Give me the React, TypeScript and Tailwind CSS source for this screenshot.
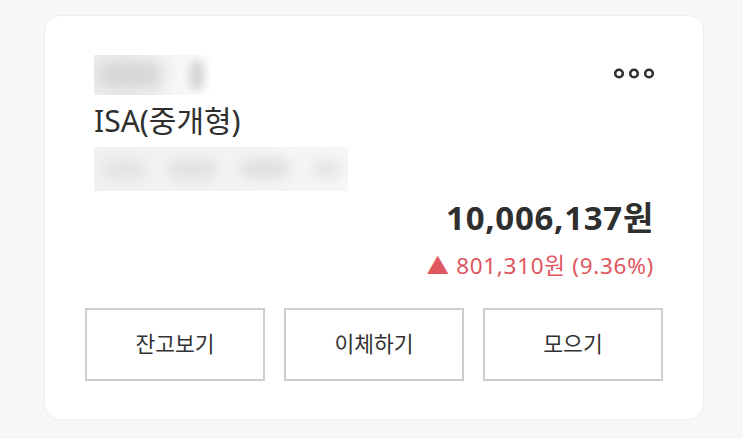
import React from 'react';

const font = { fontFamily: '"Noto Sans", "Noto Sans CJK KR", sans-serif' };

const Dots: React.FunctionComponent = () => (
  <svg width="40" height="13" viewBox="0 0 40 13" className="mt-[12px]">
    {[5, 20, 35].map((cx) => (
      <circle key={cx} cx={cx} cy="6.5" r="3.8" fill="none" stroke="#2f2f2f" strokeWidth="2.6" />
    ))}
  </svg>
);

const actions = ['잔고보기', '이체하기', '모으기'];

export default function App() {
  return (
    <div className="min-h-screen bg-[#f6f7f9] pt-[15px]" style={font}>
      <div className="ml-[44px] w-[660px] rounded-[16px] border border-[#eceef1] bg-white px-[40px] pt-[39px] pb-[38px] text-[#2f2f2f]">
        <div className="px-[9px]">
          <div className="flex items-start justify-between">
            {/* masked account nickname */}
            <div className="flex h-[40px] w-[117px] items-center gap-[28px] overflow-hidden bg-gradient-to-r from-[#ececec] via-[#efefef] to-white pl-[4px]">
              <div className="h-[26px] w-[64px] rounded-full bg-[#d6d6d6] blur-[7px]" />
              <div className="h-[30px] w-[14px] rounded-full bg-[#d2d2d2] blur-[5px]" />
            </div>
            <Dots />
          </div>
          <h1 className="mt-[6px] text-[30px] leading-[40px]">ISA(중개형)</h1>
          {/* masked account number */}
          <div className="mt-[6px] flex h-[44px] w-[254px] items-center gap-[22px] overflow-hidden bg-gradient-to-r from-[#f1f1f1] via-[#f3f3f3] to-[#f7f7f7] pl-[8px]">
            <div className="h-[20px] w-[44px] rounded-full bg-[#e4e4e4] blur-[6px]" />
            <div className="h-[20px] w-[50px] rounded-full bg-[#e2e2e2] blur-[6px]" />
            <div className="h-[20px] w-[50px] rounded-full bg-[#e0e0e0] blur-[6px]" />
            <div className="h-[20px] w-[30px] rounded-full bg-[#e6e6e6] blur-[6px]" />
          </div>
          <div className="mt-[7px] text-right text-[33px] font-bold leading-[40px] tracking-[0.7px]">10,006,137원</div>
          <div className="mt-[14px] text-right text-[22.5px] leading-[28px] tracking-[0.7px] text-[#e0585f]">
            ▲ 801,310원 (9.36%)
          </div>
        </div>
        <div className="mt-[28px] grid grid-cols-3 gap-[19px]">
          {actions.map((label) => (
            <button
              key={label}
              className="flex h-[73px] items-center justify-center border-2 border-[#cbcfd3] bg-white text-[21.5px] text-[#333]"
            >
              {label}
            </button>
          ))}
        </div>
      </div>
    </div>
  );
}
